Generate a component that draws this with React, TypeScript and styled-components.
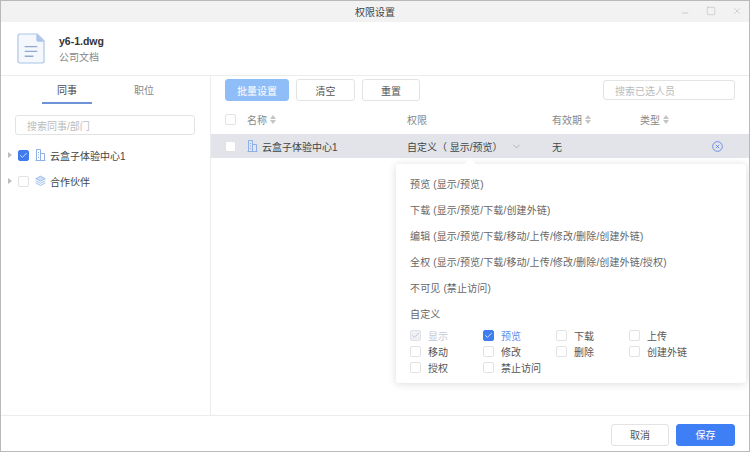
import styled, { createGlobalStyle } from "styled-components";
import { Check, ChevronDown, Minus, Square, X } from "lucide-react";

const GlobalStyle = createGlobalStyle`
    html, body {
        margin: 0;
        padding: 0;
        background: #fff;
    }
    body {
        font-family: "Liberation Sans", "Noto Sans CJK SC", sans-serif;
        font-size: 10px;
        color: #555;
    }
    * {
        box-sizing: border-box;
    }
`;

const Win = styled.div`
    width: 750px;
    height: 452px;
    border: 1px solid #b9b9b9;
    display: flex;
    flex-direction: column;
    background: #fff;
    overflow: hidden;
`;

const TitleBar = styled.div`
    height: 21px;
    flex-shrink: 0;
    background: #f2f2f2;
    position: relative;
    display: flex;
    align-items: center;
    justify-content: center;
    color: #444;
`;

const WinControls = styled.div`
    position: absolute;
    right: 7px;
    top: 5px;
    display: flex;
    gap: 16px;
    color: #a4a4a4;
`;

const LowMinus = styled(Minus)`
    transform: translateY(2px);
`;

const FileHeader = styled.div`
    height: 54px;
    flex-shrink: 0;
    display: flex;
    align-items: center;
    padding-left: 16px;
    gap: 14px;
    border-bottom: 1px solid #ececec;
`;

const FileInfo = styled.div`
    display: flex;
    flex-direction: column;
    gap: 3px;
    padding-top: 2px;
`;

const FileName = styled.div`
    font-size: 10.5px;
    font-weight: 700;
    color: #333;
    line-height: 13px;
`;

const FileOwner = styled.div`
    font-size: 10px;
    color: #888;
    line-height: 13px;
`;

const Body = styled.div`
    flex: 1;
    display: flex;
    min-height: 0;
`;

const LeftPanel = styled.div`
    width: 210px;
    flex-shrink: 0;
    border-right: 1px solid #ececec;
`;

const Tabs = styled.div`
    height: 28px;
    display: flex;
    padding-left: 41px;
    gap: 27px;
`;

const Tab = styled.div<{ $active?: boolean }>`
    width: 50px;
    display: flex;
    align-items: center;
    justify-content: center;
    font-size: 10px;
    color: ${(p) => (p.$active ? "#444" : "#888")};
    border-bottom: 2px solid ${(p) => (p.$active ? "#6b93d6" : "transparent")};
`;

const SearchInput = styled.div<{ $width: number }>`
    width: ${(p) => p.$width}px;
    height: 20px;
    border: 1px solid #e3e3e3;
    border-radius: 3px;
    display: flex;
    align-items: center;
    padding-left: 11px;
    color: #bbb;
    font-size: 10px;
`;

const LeftSearch = styled.div`
    padding: 11px 0 0 14px;
`;

const Tree = styled.div`
    padding-top: 7px;
`;

const TreeRow = styled.div`
    height: 26px;
    display: flex;
    align-items: center;
    padding-left: 7px;
    color: #444;
`;

const Caret = styled.span`
    width: 0;
    height: 0;
    border-left: 4px solid #bdbdbd;
    border-top: 3px solid transparent;
    border-bottom: 3px solid transparent;
    margin-right: 6px;
`;

const Box = styled.span<{ $checked?: boolean; $disabled?: boolean }>`
    width: 11px;
    height: 11px;
    flex-shrink: 0;
    border-radius: 2px;
    border: 1px solid ${(p) => (p.$disabled ? "#dfe2ea" : p.$checked ? "#3f7cf0" : "#e2e2e2")};
    background: ${(p) => (p.$disabled ? "#eef0f4" : p.$checked ? "#3f7cf0" : "#fff")};
    color: ${(p) => (p.$disabled ? "#b5bac6" : "#fff")};
    display: inline-flex;
    align-items: center;
    justify-content: center;
`;

const TreeIcon = styled.span`
    margin: 0 4px 0 6px;
    display: inline-flex;
`;

const RightPanel = styled.div`
    flex: 1;
    position: relative;
    min-width: 0;
`;

const Toolbar = styled.div`
    height: 30px;
    padding: 3px 14px 0 14px;
    display: flex;
    align-items: flex-start;
    gap: 7px;
`;

const Button = styled.button<{ $w: number; $variant?: "primary" | "faded" }>`
    width: ${(p) => p.$w}px;
    height: 22px;
    padding: 0;
    font-family: inherit;
    font-size: 10px;
    border-radius: 3px;
    border: 1px solid ${(p) => (p.$variant === "primary" ? "#3f7ff5" : p.$variant === "faded" ? "#8fbdf8" : "#e3e3e3")};
    background: ${(p) => (p.$variant === "primary" ? "#3f7ff5" : p.$variant === "faded" ? "#8fbdf8" : "#fff")};
    color: ${(p) => (p.$variant ? "#fff" : "#555")};
`;

const ToolbarSearch = styled.div`
    margin-left: auto;
    padding-top: 1px;
`;

const TableHead = styled.div`
    height: 28px;
    padding: 0 0 1px 14px;
    display: grid;
    grid-template-columns: 22px 160px 145px 88px 1fr;
    align-items: center;
    color: #888;
`;

const TableRow = styled.div`
    height: 24px;
    display: grid;
    grid-template-columns: 22px 160px 145px 88px 1fr 11px;
    align-items: center;
    padding: 0 26px 0 14px;
    background: #e3e4e9;
    color: #444;
`;

const Cell = styled.div`
    display: flex;
    align-items: center;
    gap: 3px;
`;

const NameCell = styled(Cell)`
    gap: 4px;
`;

const PermCell = styled(Cell)`
    gap: 8px;
    svg {
        color: #777;
    }
`;

const Sorter = styled.span`
    display: inline-flex;
    flex-direction: column;
    gap: 1px;
    &::before,
    &::after {
        content: "";
        width: 0;
        height: 0;
        border-left: 3.5px solid transparent;
        border-right: 3.5px solid transparent;
    }
    &::before {
        border-bottom: 4px solid #c4c4c4;
    }
    &::after {
        border-top: 4px solid #c4c4c4;
    }
`;

const Popup = styled.div`
    position: absolute;
    left: 185px;
    top: 88px;
    width: 350px;
    height: 219px;
    background: #fff;
    border-radius: 3px;
    box-shadow: 0 1px 8px rgba(0, 0, 0, 0.14);
    padding: 6px 14px 0;
    &::before {
        content: "";
        position: absolute;
        left: 70px;
        top: -4px;
        width: 8px;
        height: 8px;
        background: #fff;
        transform: rotate(45deg);
    }
`;

const PopupOption = styled.div`
    height: 26px;
    display: flex;
    align-items: center;
    color: #666;
    position: relative;
    letter-spacing: 0.15px;
`;

const CheckGrid = styled.div`
    display: grid;
    grid-template-columns: repeat(4, 73px);
    grid-auto-rows: 16px;
    margin-top: 1px;
`;

const CheckItem = styled.div<{ $tone?: "on" | "off" }>`
    display: flex;
    align-items: center;
    gap: 7px;
    color: ${(p) => (p.$tone === "on" ? "#5b8def" : p.$tone === "off" ? "#c4c7cf" : "#555")};
`;

const Footer = styled.div`
    height: 36px;
    flex-shrink: 0;
    border-top: 1px solid #ececec;
    display: flex;
    align-items: center;
    justify-content: flex-end;
    gap: 7px;
    padding: 2px 14px 0 0;
`;

const FileIcon = () => (
    <svg width="28" height="31" viewBox="0 0 29 32" fill="none">
        <path d="M3 1h18l7 7v21a2 2 0 0 1-2 2H3a2 2 0 0 1-2-2V3a2 2 0 0 1 2-2z" fill="#f4f8fd" stroke="#a9c4e8" strokeWidth="1.2" />
        <path d="M20 1l8 8h-6a2 2 0 0 1-2-2z" fill="#a9c4e8" />
        <path d="M8 14h13M8 19h13M8 24h9" stroke="#8fa9cc" strokeWidth="1.4" />
    </svg>
);

const BuildingIcon = () => (
    <svg width="11" height="12" viewBox="0 0 11 12" fill="none" stroke="#8fb0e6" strokeWidth="1">
        <path d="M.5 11.5h10M1.5 11.5V.5h4v11M5.5 4.5h4v7M3 3.5h1M3 6h1M3 8.5h1" />
    </svg>
);

const LayersIcon = () => (
    <svg width="11" height="12" viewBox="0 0 12 12" fill="none" stroke="#8fb0e6" strokeWidth="0.9">
        <path d="M6 .8l5.2 2.7L6 6.2.8 3.5z" fill="#cfe0f7" />
        <path d="M.8 5.8L6 8.5l5.2-2.7M.8 8L6 10.9 11.2 8" />
    </svg>
);

const RemoveIcon = () => (
    <svg width="11" height="11" viewBox="0 0 10 10" fill="none" stroke="#5f86e6" strokeWidth="0.8">
        <circle cx="5" cy="5" r="4.4" />
        <path d="M3.5 3.5l3 3M6.5 3.5l-3 3" />
    </svg>
);

const options = [
    "预览 (显示/预览)",
    "下载 (显示/预览/下载/创建外链)",
    "编辑 (显示/预览/下载/移动/上传/修改/删除/创建外链)",
    "全权 (显示/预览/下载/移动/上传/修改/删除/创建外链/授权)",
    "不可见 (禁止访问)",
    "自定义",
];

const perms = ["显示", "预览", "下载", "上传", "移动", "修改", "删除", "创建外链", "授权", "禁止访问"];

export default function App() {
    return (
        <Win>
            <GlobalStyle />
            <TitleBar>
                权限设置
                <WinControls>
                    <LowMinus size={10} strokeWidth={1.2} />
                    <Square size={10} strokeWidth={1} />
                    <X size={10} strokeWidth={1} />
                </WinControls>
            </TitleBar>
            <FileHeader>
                <FileIcon />
                <FileInfo>
                    <FileName>y6-1.dwg</FileName>
                    <FileOwner>公司文档</FileOwner>
                </FileInfo>
            </FileHeader>
            <Body>
                <LeftPanel>
                    <Tabs>
                        <Tab $active>同事</Tab>
                        <Tab>职位</Tab>
                    </Tabs>
                    <LeftSearch>
                        <SearchInput $width={180}>搜索同事/部门</SearchInput>
                    </LeftSearch>
                    <Tree>
                        <TreeRow>
                            <Caret />
                            <Box $checked>
                                <Check size={9} strokeWidth={2} />
                            </Box>
                            <TreeIcon>
                                <BuildingIcon />
                            </TreeIcon>
                            云盒子体验中心1
                        </TreeRow>
                        <TreeRow>
                            <Caret />
                            <Box />
                            <TreeIcon>
                                <LayersIcon />
                            </TreeIcon>
                            合作伙伴
                        </TreeRow>
                    </Tree>
                </LeftPanel>
                <RightPanel>
                    <Toolbar>
                        <Button $w={64} $variant="faded">批量设置</Button>
                        <Button $w={59}>清空</Button>
                        <Button $w={58}>重置</Button>
                        <ToolbarSearch>
                            <SearchInput $width={132}>搜索已选人员</SearchInput>
                        </ToolbarSearch>
                    </Toolbar>
                    <TableHead>
                        <Box />
                        <Cell>名称 <Sorter /></Cell>
                        <Cell>权限</Cell>
                        <Cell>有效期 <Sorter /></Cell>
                        <Cell>类型 <Sorter /></Cell>
                    </TableHead>
                    <TableRow>
                        <Box />
                        <NameCell>
                            <BuildingIcon />
                            云盒子体验中心1
                        </NameCell>
                        <PermCell>
                            自定义（ 显示/预览）
                            <ChevronDown size={11} strokeWidth={1} />
                        </PermCell>
                        <Cell>无</Cell>
                        <Cell />
                        <Cell>
                            <RemoveIcon />
                        </Cell>
                    </TableRow>
                    <Popup>
                        {options.map((o) => (
                            <PopupOption key={o}>{o}</PopupOption>
                        ))}
                        <CheckGrid>
                            {perms.map((p, i) => (
                                <CheckItem key={p} $tone={i === 0 ? "off" : i === 1 ? "on" : undefined}>
                                    <Box $checked={i === 1} $disabled={i === 0}>
                                        {i < 2 && <Check size={9} strokeWidth={2} />}
                                    </Box>
                                    {p}
                                </CheckItem>
                            ))}
                        </CheckGrid>
                    </Popup>
                </RightPanel>
            </Body>
            <Footer>
                <Button $w={58}>取消</Button>
                <Button $w={59} $variant="primary">保存</Button>
            </Footer>
        </Win>
    );
}
